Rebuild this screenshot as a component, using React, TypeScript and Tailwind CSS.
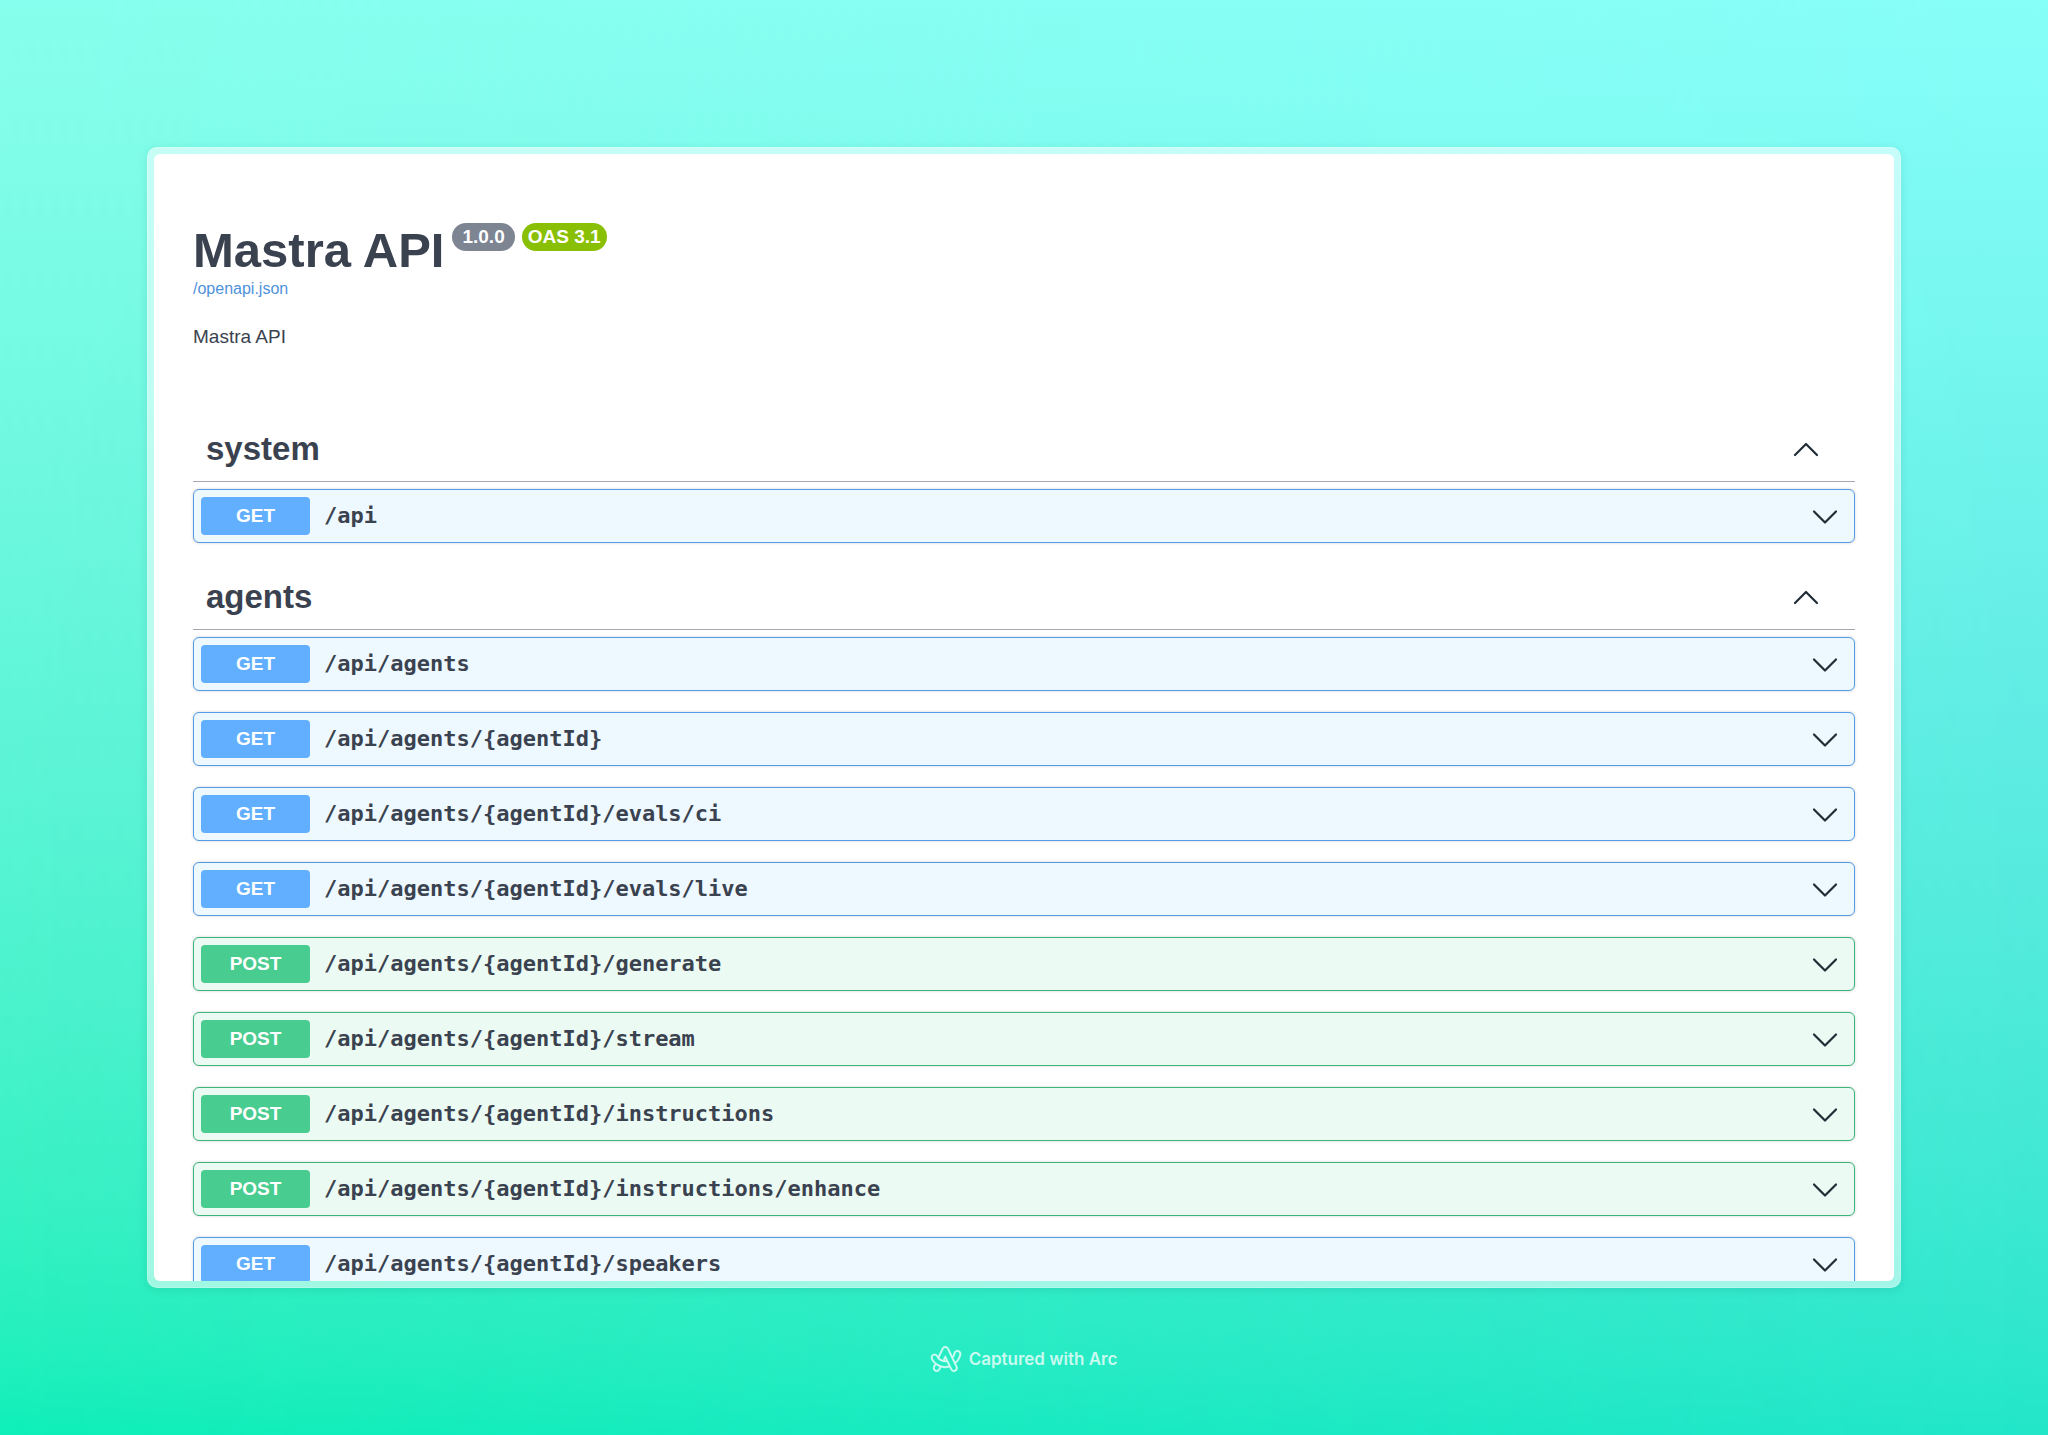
import { useState } from "react";
import { SiArc } from "react-icons/si";

type Method = "GET" | "POST";

interface Operation {
  method: Method;
  path: string;
}

interface Tag {
  name: string;
  operations: Operation[];
}

const tags: Tag[] = [
  {
    name: "system",
    operations: [{ method: "GET", path: "/api" }],
  },
  {
    name: "agents",
    operations: [
      { method: "GET", path: "/api/agents" },
      { method: "GET", path: "/api/agents/{agentId}" },
      { method: "GET", path: "/api/agents/{agentId}/evals/ci" },
      { method: "GET", path: "/api/agents/{agentId}/evals/live" },
      { method: "POST", path: "/api/agents/{agentId}/generate" },
      { method: "POST", path: "/api/agents/{agentId}/stream" },
      { method: "POST", path: "/api/agents/{agentId}/instructions" },
      { method: "POST", path: "/api/agents/{agentId}/instructions/enhance" },
      { method: "GET", path: "/api/agents/{agentId}/speakers" },
    ],
  },
];

const rowStyles: Record<Method, string> = {
  GET: "border-[#559ce8] bg-[#edf8ff]",
  POST: "border-[#3cb47a] bg-[#ebfaf3]",
};

const badgeStyles: Record<Method, string> = {
  GET: "bg-[#61affe]",
  POST: "bg-[#49cc90]",
};

const Chevron = ({ up = false }: { up?: boolean }) => (
  <svg
    viewBox="0 0 28 28"
    className="size-7 shrink-0"
    fill="none"
    stroke="#222c36"
    strokeWidth="2.2"
    strokeLinecap="round"
    strokeLinejoin="round"
    aria-hidden="true"
  >
    <path d={up ? "M3 20 14 9 25 20" : "M3 9.5 14 20.5 25 9.5"} />
  </svg>
);

const OperationRow = ({ method, path }: Operation) => (
  <button
    type="button"
    className={`flex w-full items-center rounded-md border p-[7px] pr-[15px] text-left shadow-[0_0_3px_rgba(0,0,0,0.19)] ${rowStyles[method]}`}
  >
    <span
      className={`w-[109px] shrink-0 rounded py-1 text-center text-[19px] leading-[30px] font-bold text-white ${badgeStyles[method]}`}
    >
      {method}
    </span>
    <span className="flex-1 pl-3.5 font-['DejaVu_Sans_Mono',monospace] text-[22px] leading-7 font-bold">
      {path}
    </span>
    <Chevron />
  </button>
);

const TagSection = ({ name, operations }: Tag) => {
  const [open, setOpen] = useState(true);

  return (
    <section>
      <h2 className="border-b border-[#a4a9b1]">
        <button
          type="button"
          aria-expanded={open}
          onClick={() => setOpen(!open)}
          className="flex w-full items-center justify-between py-3 pr-[35px] pl-[13px] text-[33px] leading-10 font-bold"
        >
          {name}
          <Chevron up={open} />
        </button>
      </h2>
      {open && (
        <div className="flex flex-col gap-[21px] pt-[7px] pb-[22px]">
          {operations.map((op) => (
            <OperationRow key={op.method + op.path} {...op} />
          ))}
        </div>
      )}
    </section>
  );
};

const App = () => {
  return (
    <div className="relative isolate flex h-screen flex-col bg-linear-to-b from-[#88ffee] via-[#5ff5d8] to-[#0eefb9] px-[147px] pt-[147px] font-['Liberation_Sans',Arial,sans-serif] text-[#3a424f]">
      {/* cooler tint towards the right edge */}
      <div className="absolute inset-0 -z-10 bg-linear-to-b from-[#87fff9] via-[#60ece4] to-[#22e6c9] [mask-image:linear-gradient(to_right,transparent,black)]" />

      <main className="flex min-h-0 flex-1 flex-col rounded-[10px] border border-white/20 bg-white/55 p-1.5 shadow-[0_2px_10px_rgba(0,80,70,0.12)]">
        <div className="min-h-0 flex-1 overflow-hidden rounded-md bg-white px-[39px] pt-[69px]">
          <header className="pb-[66px]">
            <div className="flex items-start gap-2">
              <h1 className="text-[49px] leading-[54px] font-bold">
                Mastra API
              </h1>
              <div className="flex gap-[7px] text-[19px] leading-7 font-bold text-white">
                <span className="rounded-full bg-[#7d8492] px-2.5">1.0.0</span>
                <span className="rounded-full bg-[#89bf04] px-1.5">
                  OAS 3.1
                </span>
              </div>
            </div>
            <a
              href="/openapi.json"
              className="mt-0.5 block w-fit text-base leading-5 text-[#4f92dc]"
            >
              /openapi.json
            </a>
            <p className="pt-6 text-[19px] leading-7">Mastra API</p>
          </header>

          {tags.map((tag) => (
            <TagSection key={tag.name} {...tag} />
          ))}
        </div>
      </main>

      <footer className="flex h-[147px] shrink-0 items-center justify-center gap-2 pb-1.5 text-white/75">
        <SiArc
          className="size-[30px] overflow-visible"
          strokeWidth="0.5"
          aria-hidden="true"
        />
        <span className="font-['Inter',sans-serif] text-[17px] leading-6 font-semibold">
          Captured with Arc
        </span>
      </footer>
    </div>
  );
};

export default App;
